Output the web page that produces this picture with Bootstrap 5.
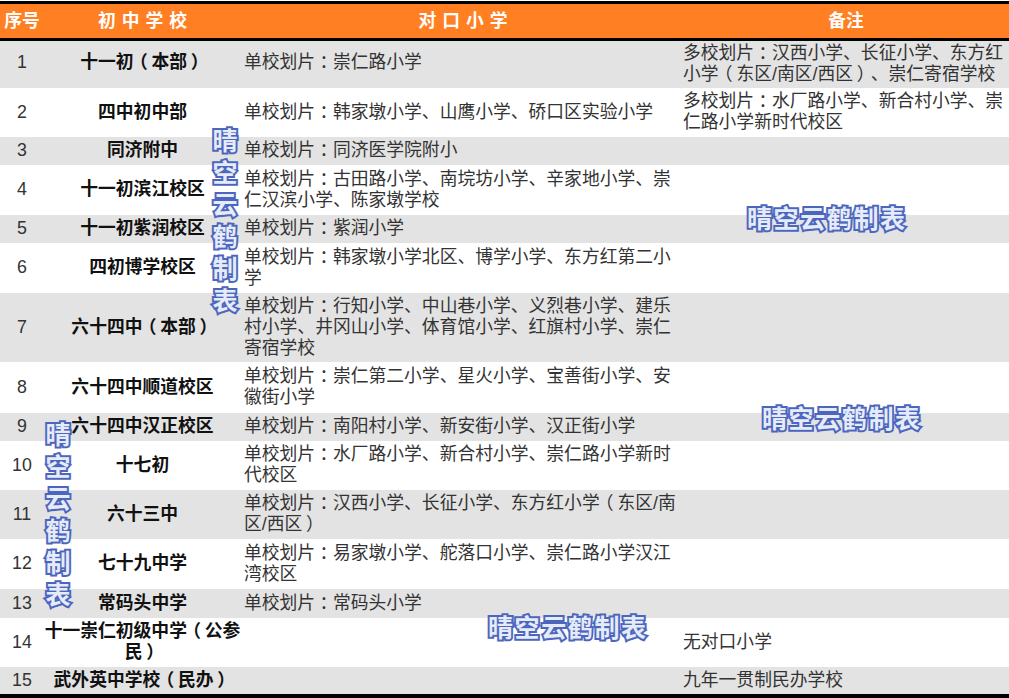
<!DOCTYPE html>
<html lang="zh-CN">
<head>
    <meta charset="UTF-8">
    <meta name="viewport" content="width=device-width, initial-scale=1.0">
    <title>初中学校对口小学</title>
    <link href="https://cdn.jsdelivr.net/npm/bootstrap@5.3.0/dist/css/bootstrap.min.css" rel="stylesheet">
    <style>
        body {
            font-family: "Liberation Sans", "Noto Sans CJK SC", sans-serif;
            font-size: 17.8px;
            line-height: 21px;
            background: #fff;
        }
        .sheet { width: 1009px; padding-top: 1px; }
        .sheet .table {
            table-layout: fixed;
            width: 1009px;
            color: #333;
            --bs-table-color: #333;
            --bs-table-striped-bg: #e3e3e3;
            --bs-table-striped-color: #333;
            border-top: 3px solid #000;
            border-bottom: 4px solid #000;
        }
        .sheet thead th {
            background: #ff7f22;
            color: #fff;
            font-weight: 700;
            height: 37px;
            padding: 0;
            text-align: center;
            vertical-align: middle;
            border-bottom: 3px solid #000;
        }
        .sheet thead th.school-head { letter-spacing: 6px; padding-left: 6px; }
        .sheet thead th.primary-head { letter-spacing: 6px; padding-left: 11px; }
        .sheet thead th.note-head { padding-left: 3px; }
        .sheet tbody td { padding: 0 3px; vertical-align: middle; }
        .sheet tbody td.no { padding: 0; text-align: center; }
        .sheet tbody td.school { padding: 0; text-align: center; font-weight: 700; color: #111; }
        .sheet tbody tr:first-child td:not(:last-child) { padding-bottom: 3px; }
        .punct {
            display: inline-block;
            width: 1em;
            text-align: center;
            font-feature-settings: "palt";
        }
        .stamp {
            position: absolute;
            font-family: "Noto Sans CJK SC", sans-serif;
            font-weight: 700;
            font-size: 25px;
            line-height: 27px;
            white-space: nowrap;
            color: #e6ebfa;
            -webkit-text-stroke: 4px #4d66bd;
            paint-order: stroke fill;
            letter-spacing: 1.6px;
        }
        .stamp.down { writing-mode: vertical-rl; letter-spacing: 7px; }
        .m1 { left: 747px; top: 204px; }
        .m2 { left: 762px; top: 404px; }
        .m3 { left: 488px; top: 613px; }
        .m4 { left: 211px; top: 128px; }
        .m5 { left: 44px; top: 422px; }
    </style>
</head>
<body>
    <div class="sheet position-relative overflow-hidden">
        <table class="table table-striped table-borderless mb-0">
            <colgroup>
                <col style="width: 44px">
                <col style="width: 197px">
                <col style="width: 439px">
                <col style="width: 329px">
            </colgroup>
            <thead>
                <tr>
                    <th>序号</th>
                    <th class="school-head">初中学校</th>
                    <th class="primary-head">对口小学</th>
                    <th class="note-head">备注</th>
                </tr>
            </thead>
            <tbody id="rows"></tbody>
        </table>
        <div class="stamp m1">晴空云鹤制表</div>
        <div class="stamp m2">晴空云鹤制表</div>
        <div class="stamp m3">晴空云鹤制表</div>
        <div class="stamp down m4">晴空云鹤制表</div>
        <div class="stamp down m5">晴空云鹤制表</div>
    </div>

    <script>
        // [height, school, primary schools, note]
        var data = [
            [48, '十一初（本部）', '单校划片：崇仁路小学', '多校划片：汉西小学、长征小学、东方红小学（东区/南区/西区）、崇仁寄宿学校'],
            [49, '四中初中部', '单校划片：韩家墩小学、山鹰小学、硚口区实验小学', '多校划片：水厂路小学、新合村小学、崇仁路小学新时代校区'],
            [28, '同济附中', '单校划片：同济医学院附小', ''],
            [50, '十一初滨江校区', '单校划片：古田路小学、南垸坊小学、辛家地小学、崇仁汉滨小学、陈家墩学校', ''],
            [28, '十一初紫润校区', '单校划片：紫润小学', ''],
            [50, '四初博学校区', '单校划片：韩家墩小学北区、博学小学、东方红第二小学', ''],
            [69, '六十四中（本部）', '单校划片：行知小学、中山巷小学、义烈巷小学、建乐村小学、井冈山小学、体育馆小学、红旗村小学、崇仁寄宿学校', ''],
            [51, '六十四中顺道校区', '单校划片：崇仁第二小学、星火小学、宝善街小学、安徽街小学', ''],
            [28, '六十四中汉正校区', '单校划片：南阳村小学、新安街小学、汉正街小学', ''],
            [49, '十七初', '单校划片：水厂路小学、新合村小学、崇仁路小学新时代校区', ''],
            [49, '六十三中', '单校划片：汉西小学、长征小学、东方红小学（东区/南区/西区）', ''],
            [50, '七十九中学', '单校划片：易家墩小学、舵落口小学、崇仁路小学汉江湾校区', ''],
            [29, '常码头中学', '单校划片：常码头小学', ''],
            [49, '十一崇仁初级中学（公参民）', '', '无对口小学'],
            [29, '武外英中学校（民办）', '', '九年一贯制民办学校']
        ];

        function punct(text) {
            return text.replace(/[：（）]/g, '<span class="punct">$&</span>');
        }

        var html = '';
        for (var i = 0; i < data.length; i++) {
            html += `<tr style="height: ${data[i][0]}px">
                <td class="no">${i + 1}</td>
                <td class="school">${punct(data[i][1])}</td>
                <td>${punct(data[i][2])}</td>
                <td>${punct(data[i][3])}</td>
            </tr>`;
        }
        document.getElementById('rows').innerHTML = html;
    </script>
    <script src="https://cdn.jsdelivr.net/npm/bootstrap@5.3.0/dist/js/bootstrap.bundle.min.js"></script>
</body>
</html>
